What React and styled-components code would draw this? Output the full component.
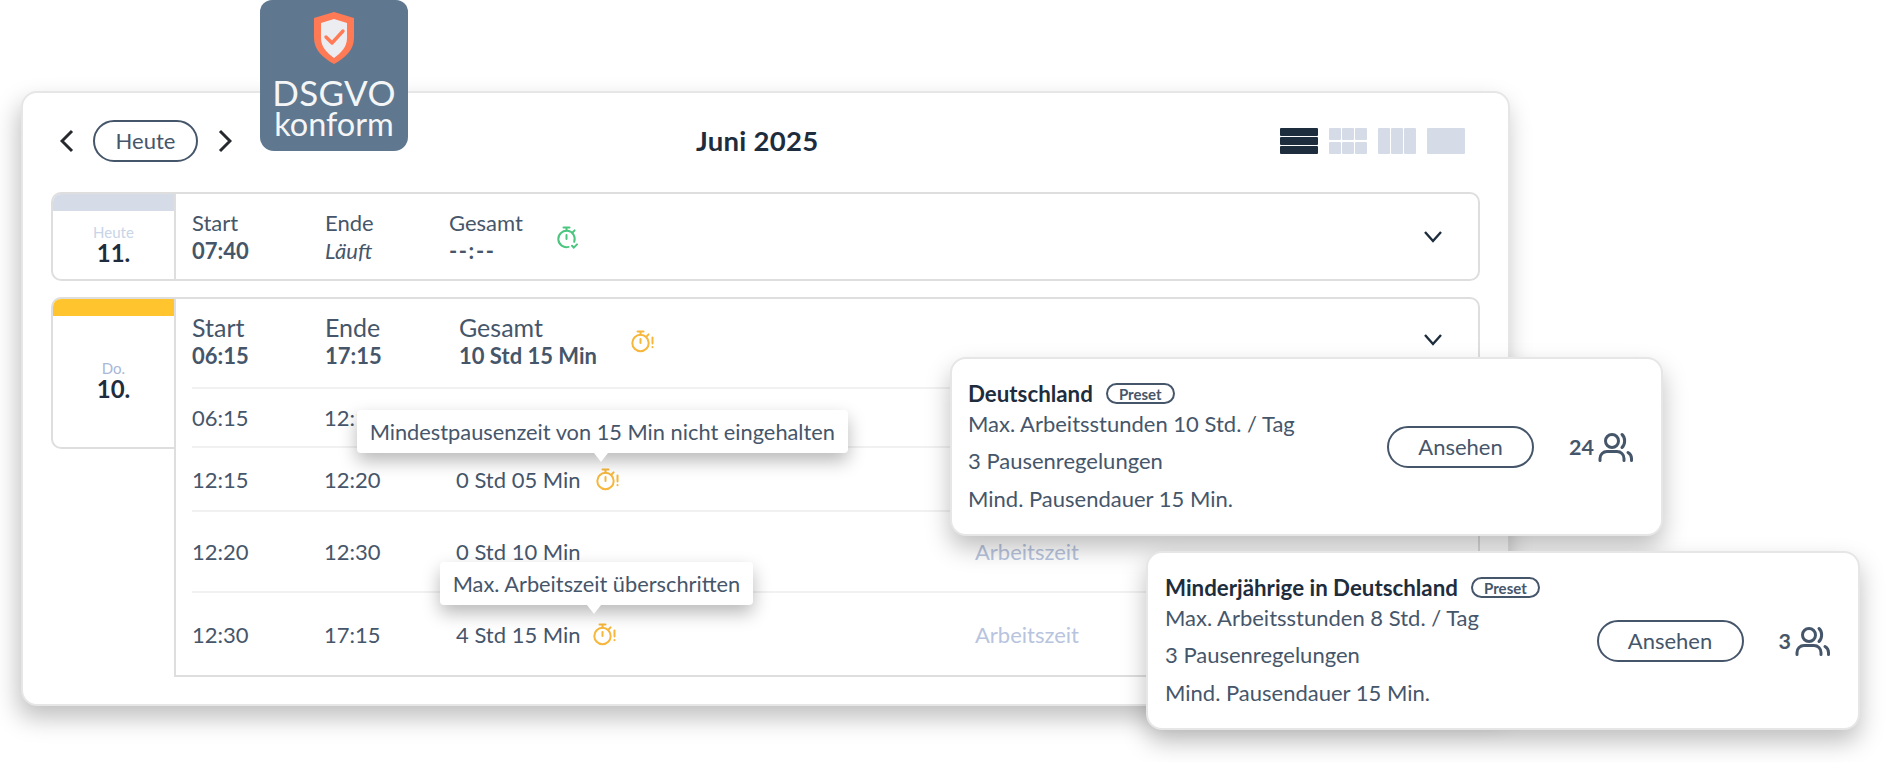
import React from "react";
import styled, { createGlobalStyle } from "styled-components";

const Global = createGlobalStyle`
  html, body { margin: 0; padding: 0; background: #fff; }
  body { font-family: "Lato", "Noto Sans", sans-serif; color: #46566a; }
  * { box-sizing: border-box; }
`;

const Page = styled.div`
  position: relative; width: 1895px; height: 762px; overflow: hidden;
  background: #fff; padding: 91px 0 0 21px;
`;
const Panel = styled.section`
  width: 1489px; height: 615px; background: #fff;
  border: 2px solid #e6e6e6; border-radius: 16px;
  box-shadow: -3px 12px 24px rgba(0,0,0,.25);
  padding: 27px 28px 0;
`;
const Header = styled.header`
  display: grid; grid-template-columns: 645px auto 1fr; align-items: center; height: 41px;
`;
const Nav = styled.div`
  display: flex; align-items: center; padding-left: 9px;
`;
const NavChevron = styled.svg`
  width: 14px; height: 24px; fill: none; stroke: #26292d; stroke-width: 3; flex: none;
`;
const PillButton = styled.button`
  font: 400 22px/1 "Lato", sans-serif; color: #46566a; background: #fff;
  border: 2px solid #46566a; border-radius: 22px;
  width: ${p => p.$w}px; height: ${p => p.$h}px; padding: 0;
  margin: ${p => p.$margin || 0}; flex: none;
`;
const Title = styled.h1`
  margin: 0 0 2px; font-size: 27.5px; font-weight: 700; color: #1e2d3d; line-height: 39px; letter-spacing: .3px;
`;
const Views = styled.div`
  display: flex; gap: 11px; justify-self: end; margin-right: 15px;
`;
const ViewIcon = styled.div`
  width: 38px; height: 26px; display: grid; gap: 1.5px;
  grid-template-columns: repeat(${p => p.$cols}, 1fr);
  grid-template-rows: repeat(${p => p.$rows}, 1fr);
`;
const ViewCell = styled.span`
  background: ${p => (p.$active ? "#1e2d3d" : "#d5dce8")}; border-radius: 1px;
`;

const DayRow = styled.div`
  display: grid; grid-template-columns: 123px 1fr; align-items: start;
  margin-top: ${p => p.$mt}px; height: ${p => p.$h}px;
`;
const Day = styled.div`
  height: ${p => p.$h}px; border: 2px solid #dedede; border-right: none;
  border-radius: 10px 0 0 10px; overflow: hidden; display: flex; flex-direction: column;
`;
const DayBand = styled.div`
  height: 17px; flex: none; background: ${p => p.$color};
`;
const DayBody = styled.div`
  flex: 1; display: flex; flex-direction: column; align-items: center; justify-content: center;
  padding-bottom: ${p => p.$pb}px;
`;
const DayName = styled.span`
  font-size: 15px; line-height: 18px; color: ${p => p.$color};
`;
const DayNum = styled.strong`
  font-size: 24px; line-height: 24px; font-weight: 700; color: #1e2d3d;
`;
const Main = styled.div`
  height: 100%; border: 2px solid #dedede; border-radius: 0 10px ${p => p.$br}px 0;
  padding-left: 16px; position: relative;
`;
const Summary = styled.div`
  display: flex; align-items: center; height: ${p => p.$h}px; padding-bottom: ${p => p.$pb || 0}px;
`;
const Field = styled.div`
  width: ${p => p.$w}px; flex: none; display: flex; flex-direction: column;
`;
const Label = styled.span`
  font-size: ${p => p.$size}px; line-height: ${p => p.$lh}px;
`;
const Value = styled.span`
  font-size: 22px; line-height: 28px; font-weight: ${p => (p.$plain ? 400 : 700)};
  font-style: ${p => (p.$italic ? "italic" : "normal")};
  letter-spacing: ${p => p.$spread || 0}px;
`;
const Expand = styled.svg`
  position: absolute; right: 35px; top: ${p => p.$top}px; width: 20px; height: 12px;
  fill: none; stroke: #1e2d3d; stroke-width: 2.4;
`;
const Entry = styled.div`
  display: grid; grid-template-columns: 132px 132px 519px 1fr; align-items: center;
  height: ${p => p.$h}px; border-top: 2px solid #f1f1f1; font-size: 22px;
`;
const Duration = styled.div`
  display: flex; align-items: center; gap: ${p => p.$gap}px;
`;
const Kind = styled.span`
  color: #b8c4de;
`;
const IconAnchor = styled.span`
  position: relative; display: inline-flex; flex: none;
`;
const Tip = styled.div`
  position: absolute; left: ${p => p.$left}px; bottom: ${p => p.$bottom}px; height: 43px;
  padding: 0 13px; display: flex; align-items: center; white-space: nowrap; background: #fff;
  border-radius: 4px; font-size: 21.8px; color: #46566a;
  box-shadow: 0 8px 18px rgba(0,0,0,.28);
  z-index: 2;
  &::after {
    content: ""; position: absolute; top: 100%; left: ${p => p.$arrow}px; margin-left: -7px;
    border: 7px solid transparent; border-top: 9px solid #fff; border-bottom: 0;
  }
`;
const Badge = styled.div`
  position: absolute; left: 260px; top: 0; width: 148px; height: 151px; background: #5f788f;
  border-radius: 12px 12px 14px 14px;
  display: flex; flex-direction: column; align-items: center; color: #f4f5f7; padding-top: 12px; z-index: 1;
`;
const BadgeTop = styled.span`
  font-size: 35px; line-height: 36px; margin-top: 10px; letter-spacing: .4px;
`;
const BadgeBottom = styled.span`
  font-size: 32.5px; line-height: 30px; margin-top: -1px;
`;
const Preset = styled.article`
  position: absolute; left: ${p => p.$left}px; top: ${p => p.$top}px; width: ${p => p.$w}px; height: 179px;
  background: #fff; border: 2px solid #e6e6e6; border-radius: 16px;
  box-shadow: 0 12px 24px rgba(0,0,0,.25);
  display: flex; align-items: center; padding: 0 27px 0 ${p => p.$pl}px; z-index: 3;
`;
const PresetInfo = styled.div`
  flex: 1; display: flex; flex-direction: column; padding-top: 5px;
`;
const PresetTitle = styled.div`
  display: flex; align-items: center; gap: 13px; height: 26px; margin-bottom: -2px;
  font-size: 22.3px; font-weight: 700; color: #1e2d3d;
`;
const Tag = styled.span`
  font-size: 15px; font-weight: 700; color: #46566a; border: 2px solid #46566a; border-radius: 11px;
  height: 21px; width: 69px; display: flex; align-items: center; justify-content: center;
`;
const PresetLine = styled.div`
  font-size: 22px; line-height: 37.5px;
`;
const Count = styled.div`
  display: flex; align-items: center; gap: 3px; margin-left: 35px; font-size: 21.5px; font-weight: 700;
`;
const Users = styled.svg`
  width: 37px; height: 30px; fill: none; stroke: #46566a; stroke-width: 3; stroke-linecap: round;
`;

const Chevron = ({ dir }) => (
  <NavChevron viewBox="0 0 14 24">
    <polyline points={dir === "left" ? "12,2 2,12 12,22" : "2,2 12,12 2,22"} />
  </NavChevron>
);
const Down = ({ top }) => (
  <Expand $top={top} viewBox="0 0 20 12"><polyline points="2,1 10,10 18,1" /></Expand>
);
const Stopwatch = ({ state }) => {
  const c = state === "ok" ? "#4cc57f" : "#f6b73c";
  return (
    <svg width="24" height="24" viewBox="0 0 24 24" fill="none" stroke={c} strokeWidth="2" strokeLinecap="round">
      {state === "ok"
        ? <path d="M11.6 21.9A8.2 8.2 0 1 1 17.2 16.8" />
        : <circle cx="9.5" cy="14" r="8.2" />}
      <path d="M6.5 2.4h6M9.5 2.4v3M16 7l1.6-1.6M9.5 10v4" />
      {state === "ok"
        ? <path d="M15 20.8l1.8 1.8 3.2-3.2" />
        : <path d="M21.5 8.5v6M21.5 18v.3" />}
    </svg>
  );
};
const Shield = () => (
  <svg width="42" height="52" viewBox="0 0 42 52">
    <path d="M21 0l20 6v20c0 12-9 20-20 26C10 46 1 38 1 26V6z" fill="#ff7a55" />
    <path d="M21 7l13 4v15c0 9-6 15-13 20C14 41 8 35 8 26V11z" fill="#ecedf1" />
    <path d="M13 25l6 6 11-12" fill="none" stroke="#ff7a55" strokeWidth="3.4" strokeLinecap="round" strokeLinejoin="round" />
  </svg>
);
const PeopleIcon = () => (
  <Users viewBox="0 0 37 30">
    <circle cx="15" cy="9" r="6.5" />
    <path d="M25 2.5c3.5 3 3.5 10 0 13" />
    <path d="M3 28.5v-2a7 7 0 0 1 7-7h10a7 7 0 0 1 7 7v2" />
    <path d="M34.5 28.5v-2a7 7 0 0 0-3.5-6" />
  </Users>
);

const views = [
  { cols: 1, rows: 3, active: true },
  { cols: 3, rows: 2 },
  { cols: 3, rows: 1 },
  { cols: 1, rows: 1 },
];
const PresetCard = ({ left, top, w, pl, title, hours, count }) => (
  <Preset $left={left} $top={top} $w={w} $pl={pl}>
    <PresetInfo>
      <PresetTitle>{title}<Tag>Preset</Tag></PresetTitle>
      <PresetLine>{hours}</PresetLine>
      <PresetLine>3 Pausenregelungen</PresetLine>
      <PresetLine>Mind. Pausendauer 15 Min.</PresetLine>
    </PresetInfo>
    <PillButton $w={147} $h={42}>Ansehen</PillButton>
    <Count>{count}<PeopleIcon /></Count>
  </Preset>
);

export default function App() {
  return (
    <Page>
      <Global />
      <Panel>
        <Header>
          <Nav>
            <Chevron dir="left" />
            <PillButton $w={105} $h={42} $margin="0 20px 0 19px">Heute</PillButton>
            <Chevron dir="right" />
          </Nav>
          <Title>Juni 2025</Title>
          <Views>
            {views.map((v, i) => (
              <ViewIcon key={i} $cols={v.cols} $rows={v.rows}>
                {Array.from({ length: v.cols * v.rows }).map((_, j) => <ViewCell key={j} $active={v.active} />)}
              </ViewIcon>
            ))}
          </Views>
        </Header>

        <DayRow $mt={31} $h={89}>
          <Day $h={89}>
            <DayBand $color="#d5dce8" />
            <DayBody $pb={2}><DayName $color="#c8d4e8">Heute</DayName><DayNum>11.</DayNum></DayBody>
          </Day>
          <Main $br={10}>
            <Summary $h={85}>
              <Field $w={133}><Label $size={22} $lh={28}>Start</Label><Value>07:40</Value></Field>
              <Field $w={124}><Label $size={22} $lh={28}>Ende</Label><Value $plain $italic>Läuft</Value></Field>
              <Field $w={108}><Label $size={22} $lh={28}>Gesamt</Label><Value $spread={1.6}>--:--</Value></Field>
              <IconAnchor><Stopwatch state="ok" /></IconAnchor>
            </Summary>
            <Down top={37} />
          </Main>
        </DayRow>

        <DayRow $mt={16} $h={380}>
          <Day $h={152}>
            <DayBand $color="#ffc42e" />
            <DayBody $pb={3}><DayName $color="#a8b6d8">Do.</DayName><DayNum>10.</DayNum></DayBody>
          </Day>
          <Main $br={0}>
            <Summary $h={88} $pb={4}>
              <Field $w={133}><Label $size={25} $lh={29}>Start</Label><Value>06:15</Value></Field>
              <Field $w={134}><Label $size={25} $lh={29}>Ende</Label><Value>17:15</Value></Field>
              <Field $w={172}><Label $size={25} $lh={29}>Gesamt</Label><Value>10 Std 15 Min</Value></Field>
              <IconAnchor><Stopwatch state="warn" /></IconAnchor>
            </Summary>
            <Down top={35} />
            <Entry $h={59}><span>06:15</span><span>12:15</span></Entry>
            <Entry $h={64}>
              <span>12:15</span><span>12:20</span>
              <Duration $gap={15}>
                0 Std 05 Min
                <IconAnchor>
                  <Stopwatch state="warn" />
                  <Tip $left={-239} $bottom={38} $arrow={244}>Mindestpausenzeit von 15 Min nicht eingehalten</Tip>
                </IconAnchor>
              </Duration>
            </Entry>
            <Entry $h={81}><span>12:20</span><span>12:30</span><span>0 Std 10 Min</span><Kind>Arbeitszeit</Kind></Entry>
            <Entry $h={84}>
              <span>12:30</span><span>17:15</span>
              <Duration $gap={12}>
                4 Std 15 Min
                <IconAnchor>
                  <Stopwatch state="warn" />
                  <Tip $left={-153} $bottom={41} $arrow={154}>Max. Arbeitszeit überschritten</Tip>
                </IconAnchor>
              </Duration>
              <Kind>Arbeitszeit</Kind>
            </Entry>
          </Main>
        </DayRow>
      </Panel>

      <Badge>
        <Shield />
        <BadgeTop>DSGVO</BadgeTop>
        <BadgeBottom>konform</BadgeBottom>
      </Badge>

      <PresetCard left={950} top={357} w={713} pl={16} title="Deutschland" hours="Max. Arbeitsstunden 10 Std. / Tag" count="24" />
      <PresetCard left={1146} top={551} w={714} pl={17} title="Minderjährige in Deutschland" hours="Max. Arbeitsstunden 8 Std. / Tag" count="3" />
    </Page>
  );
}
